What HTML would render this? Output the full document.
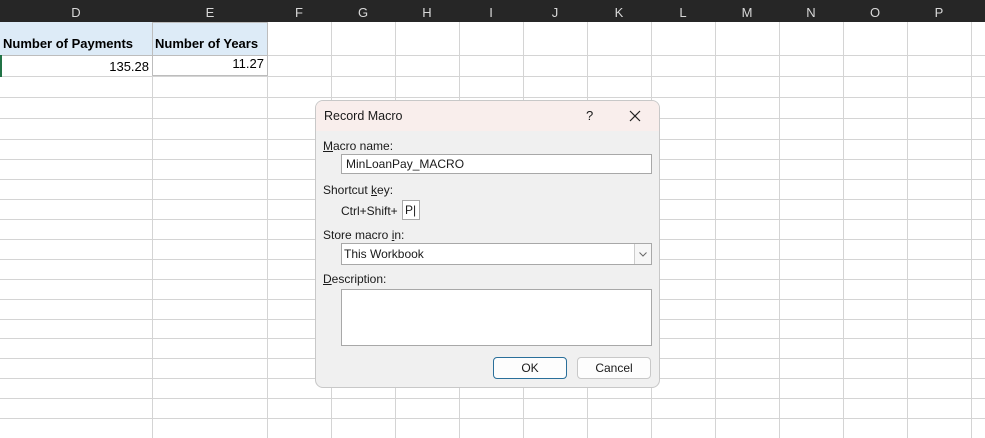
<!DOCTYPE html>
<html><head><meta charset="utf-8"><style>
body{margin:0;width:985px;height:438px;overflow:hidden;background:#fff;font-family:"Liberation Sans",Arial,sans-serif;position:relative}
.hdr{position:absolute;left:0;top:0;width:985px;height:22px;background:#262626}
.hl{position:absolute;top:5px;color:#d8d8d8;font-size:13px;width:20px;text-align:center}
.a{position:absolute}
.dlg{position:absolute;left:315px;top:100px;width:343px;height:286px;background:#f0f0f0;border:1px solid #c8c8c8;border-radius:8px;overflow:hidden;font-size:12px;color:#1a1a1a}
.tb{height:30px;background:#f9eeec}
.inp{position:absolute;background:#fff;border:1px solid #a8a8a8}
.btn{position:absolute;background:#fdfdfd;border:1px solid #c8c8c8;border-radius:4px;text-align:center;line-height:20px;font-size:12px}
</style></head><body>
<svg class="a" style="left:0;top:0" width="985" height="438">
<g stroke="#d4d4d4" stroke-width="1">
<line x1="0" y1="55.5" x2="985" y2="55.5"/><line x1="0" y1="76.5" x2="985" y2="76.5"/>
<line x1="0" y1="97.5" x2="985" y2="97.5"/><line x1="0" y1="118.5" x2="985" y2="118.5"/>
<line x1="0" y1="139.5" x2="985" y2="139.5"/><line x1="0" y1="159.5" x2="985" y2="159.5"/>
<line x1="0" y1="179.5" x2="985" y2="179.5"/><line x1="0" y1="199.5" x2="985" y2="199.5"/>
<line x1="0" y1="219.5" x2="985" y2="219.5"/><line x1="0" y1="239.5" x2="985" y2="239.5"/>
<line x1="0" y1="259.5" x2="985" y2="259.5"/><line x1="0" y1="279.5" x2="985" y2="279.5"/>
<line x1="0" y1="299.5" x2="985" y2="299.5"/><line x1="0" y1="319.5" x2="985" y2="319.5"/>
<line x1="0" y1="338.5" x2="985" y2="338.5"/><line x1="0" y1="358.5" x2="985" y2="358.5"/>
<line x1="0" y1="378.5" x2="985" y2="378.5"/><line x1="0" y1="398.5" x2="985" y2="398.5"/>
<line x1="0" y1="418.5" x2="985" y2="418.5"/>
<line x1="152.5" y1="0" x2="152.5" y2="438"/><line x1="267.5" y1="0" x2="267.5" y2="438"/>
<line x1="331.5" y1="0" x2="331.5" y2="438"/><line x1="395.5" y1="0" x2="395.5" y2="438"/>
<line x1="459.5" y1="0" x2="459.5" y2="438"/><line x1="523.5" y1="0" x2="523.5" y2="438"/>
<line x1="587.5" y1="0" x2="587.5" y2="438"/><line x1="651.5" y1="0" x2="651.5" y2="438"/>
<line x1="715.5" y1="0" x2="715.5" y2="438"/><line x1="779.5" y1="0" x2="779.5" y2="438"/>
<line x1="843.5" y1="0" x2="843.5" y2="438"/><line x1="907.5" y1="0" x2="907.5" y2="438"/>
<line x1="971.5" y1="0" x2="971.5" y2="438"/>
</g>
<rect x="0" y="22" width="267" height="33" fill="#ddebf7"/>
<rect x="152.5" y="22.5" width="115" height="53" fill="none" stroke="#bdbdbd"/>
<line x1="0" y1="55.5" x2="267" y2="55.5" stroke="#bdbdbd"/>
<rect x="0" y="55" width="2" height="22" fill="#217346"/>
</svg>
<div class="hdr"></div>
<div class="hl" style="left:66px">D</div><div class="hl" style="left:200px">E</div>
<div class="hl" style="left:289px">F</div><div class="hl" style="left:353px">G</div>
<div class="hl" style="left:417px">H</div><div class="hl" style="left:481px">I</div>
<div class="hl" style="left:545px">J</div><div class="hl" style="left:609px">K</div>
<div class="hl" style="left:673px">L</div><div class="hl" style="left:737px">M</div>
<div class="hl" style="left:801px">N</div><div class="hl" style="left:865px">O</div>
<div class="hl" style="left:929px">P</div>
<div style="position:absolute;left:0;top:22px;width:985px;height:0;border-top:0"></div>
<div class="a" style="left:3px;top:36px;font-size:13px;font-weight:bold">Number of Payments</div>
<div class="a" style="left:155px;top:36px;font-size:13px;font-weight:bold">Number of Years</div>
<div class="a" style="left:0;width:149px;top:59px;font-size:13px;text-align:right">135.28</div>
<div class="a" style="left:153px;width:111px;top:56px;font-size:13px;text-align:right">11.27</div>

<div class="dlg">
<div class="tb"></div>
<div class="a" style="left:8px;top:8px;font-size:12.5px">Record Macro</div>
<div class="a" style="left:270px;top:7px;font-size:13px">?</div>
<svg class="a" style="left:313px;top:9px" width="12" height="12"><path d="M1 1L11 11M11 1L1 11" stroke="#222" stroke-width="1.2"/></svg>
<div class="a" style="left:7px;top:38px"><u>M</u>acro name:</div>
<div class="inp" style="left:25px;top:53px;width:309px;height:18px"><span style="position:absolute;left:4px;top:2px">MinLoanPay_MACRO</span></div>
<div class="a" style="left:7px;top:82px">Shortcut <u>k</u>ey:</div>
<div class="a" style="left:25px;top:103px">Ctrl+Shift+</div>
<div class="inp" style="left:86px;top:99px;width:16px;height:18px"><span style="position:absolute;left:2px;top:2px">P|</span></div>
<div class="a" style="left:7px;top:127px">Store macro <u>i</u>n:</div>
<div class="inp" style="left:25px;top:142px;width:309px;height:20px"><span style="position:absolute;left:2px;top:3px">This Workbook</span>
<div style="position:absolute;right:0;top:0;width:16px;height:20px;border-left:1px solid #ccc;background:#f6f6f6"><svg width="16" height="20"><path d="M4.5 8.5L8 12L11.5 8.5" fill="none" stroke="#666"/></svg></div></div>
<div class="a" style="left:7px;top:171px"><u>D</u>escription:</div>
<div class="inp" style="left:25px;top:188px;width:309px;height:55px"></div>
<div class="btn" style="left:177px;top:256px;width:72px;border:1px solid #2a6f9a">OK</div>
<div class="btn" style="left:261px;top:256px;width:72px">Cancel</div>
</div>
</body></html>
